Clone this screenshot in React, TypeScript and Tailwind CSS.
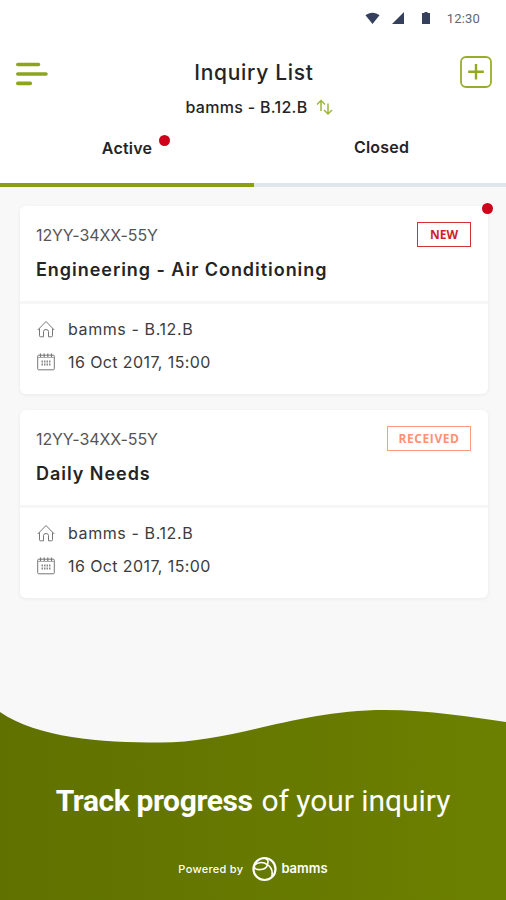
import clsx from "clsx";

type Inquiry = {
  code: string;
  title: string;
  status: string;
  statusClass: string;
  unread: boolean;
};

const inquiries: Inquiry[] = [
  {
    code: "12YY-34XX-55Y",
    title: "Engineering - Air Conditioning",
    status: "NEW",
    statusClass: "w-[54px] border-[#d2303a] text-[#cf1f2a]",
    unread: true,
  },
  {
    code: "12YY-34XX-55Y",
    title: "Daily Needs",
    status: "RECEIVED",
    statusClass: "w-[84px] border-[#ff9b80] text-[#ff9173] tracking-[0.6px]",
    unread: false,
  },
];

function StatusBar() {
  return (
    <div className="flex h-9 items-center justify-end pr-[26px] text-[#35405c]">
      <svg width="16" height="12" viewBox="0 0 16 12" fill="currentColor">
        <path d="M.5 3.2C4.5 -.2 10.5 -.2 14.5 3.2L7.5 12Z" />
      </svg>
      <svg className="ml-[11px]" width="12" height="12" viewBox="0 0 12 12" fill="currentColor">
        <path d="M12 0V12H0Z" />
      </svg>
      <svg className="ml-[18px]" width="8" height="12" viewBox="0 0 8 12" fill="currentColor">
        <path d="M2.5 0h3v1H8v11H0V1h2.5z" />
      </svg>
      <span className="ml-[17px] font-['Roboto'] text-[13px] leading-none tracking-[0.2px] text-[#62666f]">
        12:30
      </span>
    </div>
  );
}

function Header() {
  return (
    <header className="flex h-[86px] items-start justify-between pr-[14px] pl-4">
      <svg className="mt-[26px]" width="32" height="24" viewBox="0 0 32 24" stroke="#8da51c" strokeWidth="3.6" strokeLinecap="round">
        <path d="M1.8 2.5H22.5M1.8 12H30M1.8 21.4H14.3" />
      </svg>
      <div className="flex flex-col items-center">
        <h1 className="mt-[23px] text-[21px] leading-7 font-medium tracking-[0.7px]">
          Inquiry List
        </h1>
        <div className="mt-[8px] ml-[10px] flex items-center gap-2">
          <span className="text-[16px] leading-6 font-medium tracking-[0.3px]">
            bamms - B.12.B
          </span>
          <svg width="17" height="17" viewBox="0 0 17 17" fill="none" stroke="#9db83b" strokeWidth="1.5">
            <path d="M5 12V1.5M1 5.5L5 1.5L9 5.5M12 4.5V15M8 11L12 15L16 11" />
          </svg>
        </div>
      </div>
      <svg className="mt-5" width="32" height="32" viewBox="0 0 32 32" fill="none" stroke="#9aad2b">
        <rect x="1" y="1" width="30" height="30" rx="5" strokeWidth="1.8" />
        <path d="M16 8V23.5M8.2 15.7H23.8" strokeWidth="2.4" stroke="#92aa20" />
      </svg>
    </header>
  );
}

function Tabs() {
  return (
    <nav className="flex h-[65px] text-[16px] font-semibold tracking-[0.2px] text-[#242424]">
      <div className="flex w-[254px] items-start justify-center border-b-4 border-[#8ba011] pt-[14px]">
        <span className="relative leading-6">
          Active
          <span className="absolute -top-px -right-[18px] size-[11px] rounded-full bg-[#d0021b]" />
        </span>
      </div>
      <div className="flex flex-1 items-start justify-center border-b-4 border-[#dfe7ec] pt-[13px] pl-[3px]">
        <span className="leading-6">Closed</span>
      </div>
    </nav>
  );
}

function HomeIcon() {
  return (
    <svg width="18" height="18" viewBox="0 0 18 18" fill="none" stroke="#777" strokeWidth="1">
      <path d="M.7 10L9 1.5L17.3 10M2.5 8.5V15.8Q2.5 16.8 3.5 16.8H6.5V11.5Q6.5 9.5 9 9.5T11.5 11.5V16.8H14.5Q15.5 16.8 15.5 15.8V8.5" />
    </svg>
  );
}

function CalendarIcon() {
  return (
    <svg width="18" height="18" viewBox="0 0 18 18" fill="none" stroke="#777" strokeWidth="1">
      <rect x=".7" y="2.2" width="16.6" height="14.6" rx="1" />
      <path d="M1 4.5H17" stroke="#aaa" />
      <path d="M3.5 .5V4M7.2 .5V4M10.8 .5V4M14.5 .5V4" strokeWidth="1.2" />
      <path d="M4.5 8.5H13.5M4.5 11.5H13.5" strokeWidth="2" strokeDasharray="1.5 1" stroke="#888" />
    </svg>
  );
}

function InquiryCard({ item }: { item: Inquiry }) {
  return (
    <article className="relative h-[188px] rounded-md bg-white shadow-[0_1px_4px_rgba(0,0,0,0.06)]">
      <div className="h-[98px] border-b-3 border-[#f6f6f6] pr-[17px] pl-4">
        <div className="flex items-start justify-between pt-4">
          <span className="mt-[1px] text-[16px] leading-6 tracking-[-0.1px] text-[#555]">
            {item.code}
          </span>
          <span
            className={clsx(
              "flex h-[25px] items-center justify-center border font-['Open_Sans'] text-[12px] font-bold",
              item.statusClass
            )}
          >
            {item.status}
          </span>
        </div>
        <h2 className="mt-[9px] text-[18px] leading-7 font-semibold tracking-[0.96px]">
          {item.title}
        </h2>
      </div>
      <div className="flex flex-col gap-[9px] pt-[13px] pl-[17px] text-[16px] leading-6 text-[#3c3c3c]">
        <div className="flex items-center gap-[13px]">
          <HomeIcon />
          <span className="tracking-[0.6px]">bamms - B.12.B</span>
        </div>
        <div className="flex items-center gap-[13px]">
          <CalendarIcon />
          <span className="tracking-[0.4px]">16 Oct 2017, 15:00</span>
        </div>
      </div>
      {item.unread && (
        <span className="absolute -top-[3px] -right-[5px] size-[11px] rounded-full bg-[#d0021b]" />
      )}
    </article>
  );
}

function Footer() {
  return (
    <footer className="relative h-[190px] text-white">
      <svg className="absolute inset-0" width="506" height="190" viewBox="0 0 506 190">
        <defs>
          <linearGradient id="hill" x1="0" y1="0" x2="1" y2="0">
            <stop offset="0" stopColor="#607100" />
            <stop offset="1" stopColor="#6c8000" />
          </linearGradient>
        </defs>
        <path d="M0 2C38 28 100 32.5 160 32.5C235 32.5 295 0 385 0C430 0 470 7 506 12V190H0Z" fill="url(#hill)" />
      </svg>
      <div className="relative flex flex-col items-center">
        <p className="mt-[70px] flex gap-[9px] font-['Roboto'] text-[30px] leading-[42px] whitespace-nowrap">
          <b className="font-bold tracking-[-0.4px]">Track progress</b>
          <span className="tracking-[-0.05px]">of your inquiry</span>
        </p>
        <div className="mt-[33px] flex h-7 items-center">
          <span className="text-[11px] font-medium tracking-[0.3px]">Powered by</span>
          <svg className="ml-[9px]" width="25" height="26" viewBox="0 0 25 26" fill="none" stroke="#fff">
            <circle cx="12.5" cy="13" r="11" strokeWidth="2.2" />
            <path d="M2.2 9.5C6 5.5 12 6 15.2 8.6C17.5 4.5 14.5 2.2 11 2.2M2 11C4 15 14.5 14.5 15.4 8.6M15.4 8.6C19 11 21 15 19.8 20" strokeWidth="1.6" />
          </svg>
          <span className="ml-1 text-[13px] font-semibold">bamms</span>
        </div>
      </div>
    </footer>
  );
}

export default function App() {
  return (
    <div className="flex h-[900px] w-[506px] flex-col overflow-hidden bg-[#f8f8f8] font-['Inter','Liberation_Sans',sans-serif] text-[#242424]">
      <div className="bg-white">
        <StatusBar />
        <Header />
        <Tabs />
      </div>
      <main className="flex flex-1 flex-col gap-4 pt-[19px] pr-[18px] pl-5">
        {inquiries.map((item) => (
          <InquiryCard key={item.title} item={item} />
        ))}
      </main>
      <Footer />
    </div>
  );
}
